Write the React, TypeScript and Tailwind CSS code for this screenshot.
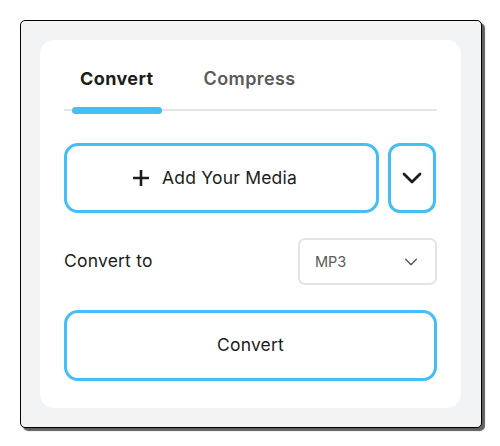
import React from 'react'

const Chevron = ({ className }: { className?: string }) => (
    <svg className={className} viewBox="0 0 24 24" fill="none" stroke="currentColor" strokeLinecap="round" strokeLinejoin="round">
        <path d="M4 8l8 8 8-8" />
    </svg>
)

const App = () => {
    return (
        <div className="w-[500px] h-[446px] bg-white pt-[20px] pl-[20px] font-['Inter',sans-serif]">
            <div className="w-[462px] h-[408px] rounded-[5px] border border-black bg-[#f1f3f4] pt-[19px] pb-[19px] pl-[19px] pr-[20px] shadow-[3px_3px_1px_#5f5f5f]">
                <div className="h-full rounded-[14px] bg-white px-[24px] pt-[25px]">
                    {/* tabs */}
                    <div className="relative flex border-b-2 border-[#e2e4e5] pb-[17px] leading-[27px]">
                        <div className="ml-[16px] text-[18px] font-bold text-[#1c1c1c] tracking-[0.4px]">Convert</div>
                        <div className="ml-[50px] text-[18px] font-semibold text-[#5a5a5a] tracking-[0.4px]">Compress</div>
                        <div className="absolute left-[8px] bottom-[-5px] h-[7px] w-[90px] rounded-full bg-[#45bdf5]" />
                    </div>

                    {/* media */}
                    <div className="mt-[32px] flex gap-[9px]">
                        <button className="flex h-[70px] w-[315px] items-center justify-center gap-[12px] rounded-[14px] border-[3px] border-[#45bdf5] bg-white pr-[14px] text-[17.5px] text-[#1c1c1c] tracking-[0.2px]">
                            <svg className="h-[18px] w-[18px]" viewBox="0 0 18 18" fill="none" stroke="#1c1c1c" strokeWidth="2.6">
                                <path d="M9 1v16M1 9h16" />
                            </svg>
                            <span>Add Your Media</span>
                        </button>
                        <button className="flex h-[70px] w-[48px] items-center justify-center rounded-[12px] border-[3px] border-[#45bdf5] bg-white text-[#1c1c1c]">
                            <Chevron className="h-[24px] w-[24px] stroke-[2.8]" />
                        </button>
                    </div>

                    {/* convert to */}
                    <div className="mt-[25px] flex items-center justify-between">
                        <span className="text-[17.5px] text-[#1c1c1c] tracking-[0.2px]">Convert to</span>
                        <div className="flex h-[47px] w-[139px] items-center justify-between rounded-[7px] border-2 border-[#e4e4e4] pl-[15px] pr-[16px]">
                            <span className="text-[14.5px] text-[#5a5a5a]">MP3</span>
                            <Chevron className="h-[16px] w-[16px] stroke-[2.2] text-[#5a5a5a]" />
                        </div>
                    </div>

                    <button className="mt-[25px] flex h-[71px] w-full items-center justify-center rounded-[14px] border-[3px] border-[#45bdf5] bg-white text-[17.5px] text-[#1c1c1c] tracking-[0.2px]">
                        Convert
                    </button>
                </div>
            </div>
        </div>
    )
}

export default App
